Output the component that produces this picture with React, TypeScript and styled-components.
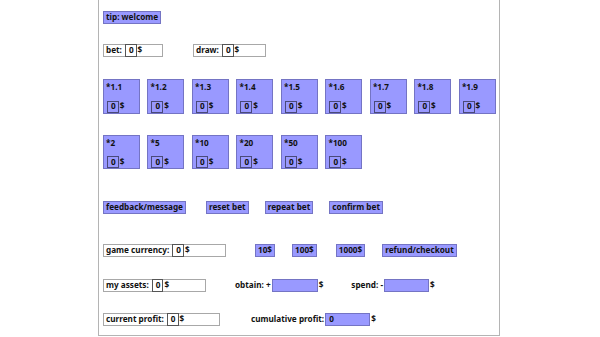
import React from 'react';
import styled, { createGlobalStyle } from 'styled-components';

const GlobalStyle = createGlobalStyle`
	html, body {
		margin: 0;
		padding: 0;
		background: #ffffff;
	}
	body {
		font-family: 'Noto Sans', 'Open Sans', sans-serif;
		font-size: 8.2px;
		font-weight: 700;
		color: #111111;
	}
`;

const PURPLE = '#9999ff';
const PURPLE_EDGE = '#7474c4';

const Frame = styled.main`
	width: 396px;
	height: 335px;
	margin: 0 0 0 98px;
	border: 1px solid #b4b4b4;
	border-top: none;
	padding: 0 0 0 4px;
	box-sizing: content-box;
	display: flex;
	flex-direction: column;
	align-items: flex-start;
	overflow: hidden;
`;

const Row = styled.div<{ top: number }>`
	display: flex;
	align-items: center;
	margin-top: ${(p) => p.top}px;
	line-height: 1;
`;

const Chip = styled.span<{ left?: number }>`
	display: inline-flex;
	align-items: center;
	height: 13px;
	box-sizing: border-box;
	padding: 0 2px;
	margin-left: ${(p) => p.left ?? 0}px;
	background: ${PURPLE};
	border: 1px solid ${PURPLE_EDGE};
	white-space: nowrap;
`;

const Field = styled.label<{ width: number; left?: number }>`
	display: inline-flex;
	align-items: stretch;
	width: ${(p) => p.width}px;
	height: 13px;
	margin-left: ${(p) => p.left ?? 0}px;
	padding-left: 2px;
	box-sizing: border-box;
	background: #ffffff;
	border: 1px solid #a8a8a8;
	white-space: nowrap;

	span {
		display: flex;
		align-items: center;
	}
`;

const NumBox = styled.span`
	display: flex;
	align-items: center;
	margin: -1px 1px -1px 3px;
	padding: 0 2px 0 3px;
	border: 1px solid #555555;
	background: #ffffff;
`;

const CardGrid = styled.div<{ top: number }>`
	display: flex;
	gap: 7.8px;
	margin-top: ${(p) => p.top}px;
`;

const Card = styled.div`
	width: 36.7px;
	height: 34.5px;
	box-sizing: border-box;
	padding: 3px 2px 0 2px;
	background: ${PURPLE};
	border: 1px solid ${PURPLE_EDGE};
	display: flex;
	flex-direction: column;
	justify-content: space-between;
	align-items: flex-start;
	line-height: 1;
`;

const CardStake = styled.div`
	display: flex;
	align-items: center;
	gap: 1px;
	margin-left: 1px;
`;

const StakeBox = styled.span`
	display: flex;
	align-items: center;
	height: 12px;
	box-sizing: border-box;
	padding: 0 2px 0 3px;
	border: 1px solid #4a4a7a;
`;

const Label = styled.span<{ left: number }>`
	margin-left: ${(p) => p.left}px;
	white-space: nowrap;
`;

const Slot = styled.span<{ width: number }>`
	display: inline-flex;
	align-items: center;
	width: ${(p) => p.width}px;
	height: 13px;
	box-sizing: border-box;
	margin: 0 1px;
	padding-left: 3px;
	background: ${PURPLE};
	border: 1px solid ${PURPLE_EDGE};
`;

const firstRow = ['1.1', '1.2', '1.3', '1.4', '1.5', '1.6', '1.7', '1.8', '1.9'];
const secondRow = ['2', '5', '10', '20', '50', '100'];

const Multiplier = ({ rate }: { rate: string }) => (
	<Card>
		<span>*{rate}</span>
		<CardStake>
			<StakeBox>0</StakeBox>
			<span>$</span>
		</CardStake>
	</Card>
);

const Amount = ({ label, width, left }: { label: string; width: number; left?: number }) => (
	<Field width={width} left={left}>
		<span>{label}</span>
		<NumBox>0</NumBox>
		<span>$</span>
	</Field>
);

export default function App() {
	return (
		<>
			<GlobalStyle />
			<Frame>
				<Row top={11}>
					<Chip>tip: welcome</Chip>
				</Row>

				<Row top={20}>
					<Amount label="bet:" width={60} />
					<Amount label="draw:" width={73} left={30} />
				</Row>

				<CardGrid top={22}>
					{firstRow.map((r) => (
						<Multiplier key={r} rate={r} />
					))}
				</CardGrid>

				<CardGrid top={21}>
					{secondRow.map((r) => (
						<Multiplier key={r} rate={r} />
					))}
				</CardGrid>

				<Row top={32}>
					<Chip>feedback/message</Chip>
					<Chip left={20}>reset bet</Chip>
					<Chip left={16}>repeat bet</Chip>
					<Chip left={16}>confirm bet</Chip>
				</Row>

				<Row top={30}>
					<Amount label="game currency:" width={123} />
					<Chip left={29}>10$</Chip>
					<Chip left={17}>100$</Chip>
					<Chip left={19}>1000$</Chip>
					<Chip left={17}>refund/checkout</Chip>
				</Row>

				<Row top={22}>
					<Amount label="my assets:" width={103} />
					<Label left={29}>obtain: +</Label>
					<Slot width={46} />
					<span>$</span>
					<Label left={28}>spend: -</Label>
					<Slot width={45} />
					<span>$</span>
				</Row>

				<Row top={21}>
					<Amount label="current profit:" width={117} />
					<Label left={31}>cumulative profit:</Label>
					<Slot width={45}>0</Slot>
					<span>$</span>
				</Row>
			</Frame>
		</>
	);
}
